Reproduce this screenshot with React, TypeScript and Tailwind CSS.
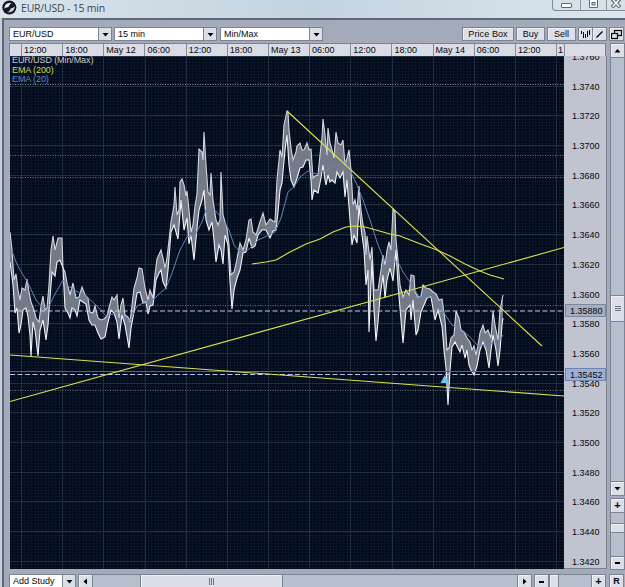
import { type ReactNode } from "react";

const TIMES = ["12:00", "18:00", "May 12", "06:00", "12:00", "18:00", "May 13", "06:00", "12:00", "18:00", "May 14", "06:00", "12:00"];

const PRICES = [
  "1.3760", "1.3740", "1.3720", "1.3700", "1.3680", "1.3660", "1.3640", "1.3620", "1.3600",
  "1.3580", "1.3560", "1.3540", "1.3520", "1.3500", "1.3480", "1.3460", "1.3440", "1.3420",
];

const HIGHS =
  "10,232 12,250 14,280 16,274 18,290 20,300 22,288 25,290 27,279 29,292 31,302 34,310 36,318 39,322 41,306 43,296 45,310 47,308 49,285 51,250 53,236 55,250 58,238 62,238 63,268 65,272 67,283 70,295 73,283 76,298 79,297 82,287 85,295 88,298 90,312 93,313 95,306 98,318 101,320 104,319 107,316 110,304 112,297 114,300 117,295 119,318 121,305 123,298 125,315 128,317 130,322 132,305 134,288 137,278 139,268 142,269 145,288 148,300 150,290 153,298 155,274 157,259 161,250 163,258 165,268 167,258 169,240 171,222 174,205 175,187 177,215 179,210 180,182 182,179 184,185 186,196 187,191 189,210 191,232 193,225 195,206 197,194 199,149 202,152 203,160 204,132 206,165 208,192 210,195 211,173 213,200 216,220 218,225 220,220 221,172 223,215 225,222 227,228 229,245 231,275 234,272 236,264 240,243 243,250 246,240 249,220 251,219 253,232 256,235 259,225 263,213 266,225 270,219 273,221 275,222 277,180 280,150 282,157 284,125 287,111 288,112 289,130 291,148 293,160 296,152 297,146 300,143 302,150 304,150 307,143 309,150 311,149 313,178 315,176 318,175 320,155 322,138 323,119 325,135 327,155 328,128 330,143 332,150 334,158 336,132 338,143 341,145 343,140 345,165 347,158 349,150 351,170 353,205 355,200 357,210 359,186 361,210 363,225 365,232 366,255 367,236 370,260 372,247 374,290 378,290 381,270 383,255 385,265 387,250 389,242 391,250 393,209 395,212 396,240 398,260 400,285 403,297 406,290 409,295 411,275 414,276 415,292 418,297 421,296 423,285 426,288 430,289 433,292 436,294 439,300 442,299 445,320 447,350 449,348 451,338 454,335 456,311 459,318 461,330 464,332 467,338 470,342 472,350 474,346 476,355 478,345 480,333 483,325 485,333 488,330 491,338 493,311 495,325 498,340 500,310 503,295";

const LOWS =
  "10,262 13,285 15,313 17,308 19,333 21,325 23,310 26,308 28,317 30,335 31,356 33,322 35,330 38,356 40,330 43,320 46,340 48,325 50,298 52,272 55,276 57,262 60,260 63,268 65,308 68,313 70,318 72,308 75,310 77,316 80,300 83,302 86,304 89,320 92,325 95,325 98,333 101,339 105,337 108,322 111,310 114,313 117,322 119,339 122,315 125,325 129,348 131,328 134,312 137,293 140,292 143,303 146,302 148,314 150,306 153,305 156,280 159,273 161,270 163,282 166,288 168,270 171,232 174,225 178,239 181,200 184,230 187,218 189,244 191,235 194,260 197,228 199,210 202,200 204,190 206,220 209,230 212,222 214,240 216,262 219,245 221,250 223,264 225,235 228,245 230,282 232,309 234,290 237,278 240,270 243,253 246,252 249,238 252,248 255,246 258,235 262,230 266,230 270,238 273,231 276,230 278,212 280,190 282,183 285,150 287,135 289,165 291,180 294,187 297,178 300,168 303,167 306,160 309,160 311,180 312,200 314,190 318,193 321,178 323,165 325,180 326,185 328,175 330,182 332,180 335,183 337,172 340,178 343,172 345,197 347,180 350,220 352,245 354,235 357,243 359,205 361,228 364,250 366,285 368,270 369,332 372,260 374,310 376,341 378,322 380,297 383,275 385,298 387,280 390,268 393,281 396,250 398,285 401,320 403,343 406,310 410,305 411,320 413,300 416,335 418,330 421,312 424,305 427,298 431,297 435,320 438,310 442,326 444,350 446,368 448,405 450,370 452,347 455,342 458,348 460,352 462,345 465,358 467,350 469,365 471,370 474,375 477,366 480,350 483,342 486,350 489,368 491,350 493,335 496,350 498,366 500,350 502,325 503,318";

const EMA20 =
  "12,251 16,262 20,270 28,283 36,300 42,307 48,308 55,294 63,280 68,286 76,291 86,296 96,305 106,316 113,314 120,313 130,321 137,306 143,303 150,303 158,295 166,288 172,273 180,250 187,237 195,235 202,222 207,207 213,208 222,218 229,230 234,245 240,252 248,250 258,240 267,236 275,232 281,218 288,192 294,187 300,177 308,171 316,174 325,170 334,167 345,162 350,170 357,185 363,200 370,220 377,242 384,260 393,261 398,262 403,272 412,285 419,297 430,297 437,300 444,313 452,325 462,330 470,337 478,346 490,344 499,341 503,335";

const EMA200 =
  "252,264 266,262 276,260 290,252 306,244 320,239 333,232 346,227 355,226 365,227 376,230 390,234 400,236 418,243 437,250 450,256 465,264 480,271 490,275 504,279";

const range = (n: number) => Array.from({ length: n }, (_, i) => i);

function Arrow({ dir }: { dir: "up" | "down" | "left" | "right" }) {
  const points = {
    up: "0.5,5.5 6.5,5.5 3.5,2",
    down: "0.5,2 6.5,2 3.5,5.5",
    left: "5,0.5 5,6.5 1.5,3.5",
    right: "2,0.5 2,6.5 5.5,3.5",
  };
  return (
    <svg width="7" height="7" viewBox="0 0 7 7">
      <polygon points={points[dir]} fill="#000" />
    </svg>
  );
}

function Btn({ className = "", children }: { className?: string; children?: ReactNode }) {
  return (
    <div className={`flex shrink-0 items-center justify-center border border-[#7b8392] bg-[#dcdfe7] shadow-[inset_1px_1px_0_#eef0f5] ${className}`}>
      {children}
    </div>
  );
}

function Combo({ label, className }: { label: string; className: string }) {
  return (
    <div className={`flex h-[14px] shrink-0 border border-[#7b8392] bg-white ${className}`}>
      <span className="flex-1 pl-[3px] leading-[13px]">{label}</span>
      <span className="flex w-[13px] items-center justify-center border-l border-[#7b8392] bg-[#dcdfe7]">
        <Arrow dir="down" />
      </span>
    </div>
  );
}

function TitleBar() {
  return (
    <div className="flex h-[18px] justify-between bg-linear-to-r from-[#d9e4ec] via-[#c4d3df] to-[#dce7ef]">
      <div className="flex pl-[2px]">
        <svg width="15" height="15" viewBox="0 0 15 15" className="shrink-0">
          <circle cx="7.3" cy="7.5" r="7" fill="#161a1f" />
          <path d="M2.5 8.5 C2.5 4 6 2.5 9.5 3.2 C6.5 4 8 6.6 5.6 7.2 C4 7.5 3.2 8 2.5 8.5Z" fill="#eef2f5" />
          <path d="M5 12 C8 12.2 7.4 8.6 10 8 C11.4 7.6 12 7 12.6 6 C13 10 10 13.2 5 12Z" fill="#c9d0d6" />
        </svg>
        <span className="pl-[4px] font-['Open_Sans',sans-serif] text-[10.5px] leading-[16px] tracking-[-0.2px] text-[#3c444c]">EUR/USD - 15 min</span>
      </div>
      <div className="flex h-[11px] w-[73px] rounded-bl-[4px] border-b border-l border-[#7c8893] bg-[#d7e1e9]">
        <div className="flex w-[28px] justify-center border-r border-[#8a96a1] pt-[3px]">
          <div className="h-[5px] w-[11px] rounded-[1px] border border-[#5d6670] bg-white" />
        </div>
        <div className="flex w-[26px] justify-center border-r border-[#8a96a1]">
          <svg width="11" height="9" viewBox="0 0 11 9">
            <path d="M1.5 0V7.5H9.5V0" fill="#fff" stroke="#5d6670" />
            <rect x="4" y="2.5" width="3" height="2.5" fill="#d7e1e9" stroke="#5d6670" />
          </svg>
        </div>
        <div className="flex flex-1 justify-center">
          <svg width="12" height="9" viewBox="0 0 12 9">
            <path d="M2 -1 L10 7.2 M10 -1 L2 7.2" stroke="#5d6670" strokeWidth="3.6" />
            <path d="M2.4 -1 L9.4 6.8 M9.6 -1 L2.6 6.8" stroke="#fff" strokeWidth="1.6" />
          </svg>
        </div>
      </div>
    </div>
  );
}

function Toolbar() {
  return (
    <div className="flex h-[14px] shrink-0">
      <Combo label="EUR/USD" className="w-[103px]" />
      <Combo label="15 min" className="ml-[2px] w-[103px]" />
      <Combo label="Min/Max" className="ml-[3px] w-[103px]" />
      <Btn className="ml-[139px] w-[52px] pt-px tracking-[0.1px]">Price Box</Btn>
      <Btn className="ml-[2px] w-[29px] pt-px">Buy</Btn>
      <Btn className="ml-[2px] w-[29px] pt-px">Sell</Btn>
      <Btn className="ml-[2px] w-[15px]">
        <svg width="11" height="9" viewBox="0 0 11 9" stroke="#000" strokeWidth="1">
          <path d="M1.5 1V4M3.5 2V8M5.5 4V8M7.5 1V7M9.5 0V5" />
        </svg>
      </Btn>
      <Btn className="-ml-px w-[15px]">
        <svg width="9" height="9" viewBox="0 0 9 9">
          <path d="M1.5 7.5L7.5 1.5" stroke="#000" strokeWidth="1.3" />
        </svg>
      </Btn>
      <Btn className="ml-[2px] w-[15px]">
        <svg width="11" height="11" viewBox="0 0 11 11" fill="#dcdfe7" stroke="#000">
          <rect x="3.5" y="1.5" width="7" height="5" strokeWidth="1.2" />
          <rect x="0.5" y="4.5" width="6" height="5" strokeWidth="1.2" />
        </svg>
      </Btn>
    </div>
  );
}

function TimeHeader() {
  return (
    <div className="flex h-[13px] w-[597px] overflow-hidden border border-b-0 border-[#7b8392] bg-[#d9dce4] leading-[12px]">
      <span className="w-[11px] shrink-0" />
      {TIMES.map((t, i) => (
        <span key={i} className="w-[41.17px] shrink-0 whitespace-nowrap border-l border-[#858c9a] pl-[2px]">{t}</span>
      ))}
      <span className="w-[8px] shrink-0 border-l border-[#858c9a] pl-px">1</span>
      <span className="flex-1 border-l border-[#858c9a]" />
    </div>
  );
}

function Chart() {
  return (
    <div className="relative h-[513px] w-[554px] bg-[#020a19]">
      <svg width="554" height="513" viewBox="10 56 554 513" className="block" fill="none">
        <g stroke="#0a1628" shapeRendering="crispEdges">
          {range(162).map((i) => (
            <line key={`v${i}`} x1={11 + i * 3.431} x2={11 + i * 3.431} y1="56" y2="569" />
          ))}
          {range(173).map((i) => (
            <line key={`h${i}`} x1="10" x2="564" y1={57 + i * 2.969} y2={57 + i * 2.969} />
          ))}
        </g>
        <g stroke="#232e3e" shapeRendering="crispEdges">
          {range(14).map((i) => (
            <line key={`V${i}`} x1={21.5 + i * 41.17} x2={21.5 + i * 41.17} y1="56" y2="569" />
          ))}
          {range(18).map((i) => (
            <line key={`H${i}`} x1="10" x2="564" y1={56.5 + i * 29.69} y2={56.5 + i * 29.69} />
          ))}
        </g>
        <path d="M10 84.5H564" stroke="#8e96a5" strokeDasharray="1 1.5" />
        <path d="M10 155.5H564M10 177.5H564M10 305.5H564M10 390.5H564" stroke="#687181" strokeDasharray="1 1.5" />

        <polygon points={`${HIGHS} ${LOWS.split(" ").reverse().join(" ")}`} fill="#747988" />
        <polyline points={HIGHS} stroke="#d3d6de" strokeWidth="1.1" />
        <polyline points={LOWS} stroke="#f1f3f7" strokeWidth="1.1" />
        <polyline points={EMA20} stroke="#6682bd" />

        <path d="M10 311H564" stroke="#c3cbe0" strokeWidth="1.2" strokeDasharray="5 2.5" />
        <path d="M10 371.5H564" stroke="#c23a46" />
        <path d="M10 374.5H564" stroke="#b7c3e6" strokeDasharray="5 2.5" />

        <g stroke="#dde04e" strokeWidth="1.1">
          <polyline points={EMA200} />
          <path d="M287 111L542 346M10 401.5L564 247.5M10 355L564 396" />
        </g>
        <polygon points="444.8,375 449,383 440.5,383" fill="#72c4ee" />
      </svg>
      <div className="absolute left-[2px] top-0 leading-[9.5px] tracking-[-0.1px] text-[#c5cad3]">
        <p>EUR/USD (Min/Max)</p>
        <p className="text-[#d0d64e]">EMA (200)</p>
        <p className="text-[#6482c8]">EMA (20)</p>
      </div>
    </div>
  );
}

function PriceAxis() {
  return (
    <div className="relative h-[513px] w-[43px] overflow-hidden border-b border-r border-[#7b8392] bg-[#c0c4d0]">
      <div className="-mt-[14px] flex flex-col">
        {PRICES.map((p) => (
          <span key={p} className="h-[29.69px] shrink-0 pl-[8px] leading-[30px]">{p}</span>
        ))}
      </div>
      <div className="absolute left-[1px] top-[248px] h-[13px] w-[41px] border border-[#7c8799] bg-[#a5afc0] pl-[4px] leading-[12px]">1.35880</div>
      <div className="absolute left-[1px] top-[312px] h-[13px] w-[41px] border border-[#7085ad] bg-[#9bb0d4] pl-[4px] leading-[12px]">1.35452</div>
    </div>
  );
}

function SideBar() {
  return (
    <div className="flex w-[15px] flex-col">
      <div className="flex h-[453px] flex-col border border-[#7b8392] bg-[#b8bfcc]">
        <Btn className="-mx-px -mt-px h-[15px]"><Arrow dir="up" /></Btn>
        <Btn className="-mx-px mt-[237px] h-[27px]">
          <div className="h-[5px] w-[6px] border-y border-[#6b7383] pt-px">
            <div className="h-px bg-[#6b7383]" />
          </div>
        </Btn>
        <Btn className="-mx-px -mb-px mt-auto h-[15px]"><Arrow dir="down" /></Btn>
      </div>
      <div className="mt-[2px] flex h-[72px] flex-col border border-[#7b8392] bg-[#b8bfcc]">
        <Btn className="-mx-px -mt-px h-[15px] text-[11px] font-bold">+</Btn>
        <Btn className="-mx-px mt-[10px] h-[10px]" />
        <Btn className="-mx-px -mb-px mt-auto h-[14px]"><i className="h-[2px] w-[5px] bg-black" /></Btn>
      </div>
    </div>
  );
}

function BottomBar() {
  return (
    <div className="mt-[4px] flex h-[15px] shrink-0">
      <Combo label="Add Study" className="w-[67px]" />
      <div className="ml-[2px] flex w-[454px] border border-[#7b8392] bg-[#b8bfcc]">
        <Btn className="-my-px -ml-px w-[15px]"><Arrow dir="left" /></Btn>
        <Btn className="-my-px ml-[47px] w-[143px] gap-px">
          <i className="h-[7px] w-px bg-[#6b7383]" />
          <i className="h-[7px] w-px bg-[#6b7383]" />
          <i className="h-[7px] w-px bg-[#6b7383]" />
        </Btn>
        <Btn className="-my-px -mr-px ml-auto w-[15px]"><Arrow dir="right" /></Btn>
      </div>
      <div className="ml-[2px] flex w-[72px] border border-[#7b8392] bg-[#b8bfcc]">
        <Btn className="-my-px -ml-px w-[15px]"><i className="h-[2px] w-[5px] bg-black" /></Btn>
        <Btn className="-my-px w-[10px]" />
        <Btn className="-my-px -mr-px ml-auto w-[15px] text-[11px] font-bold">+</Btn>
      </div>
      <Btn className="ml-[3px] w-[15px] font-bold">R</Btn>
    </div>
  );
}

export default function App() {
  return (
    <div className="h-[587px] w-[625px] overflow-hidden bg-[#c3d0db] font-['Liberation_Sans',Arial,sans-serif] text-[9px] text-[#08090c]">
      <TitleBar />
      <div className="ml-[2px] flex h-[569px] flex-col border-l-2 border-t-2 border-[#5d6775] bg-[#a3abba] pl-[5px] pt-[7px]">
        <Toolbar />
        <div className="mt-[2px] flex gap-[3px]">
          <div>
            <TimeHeader />
            <div className="flex pl-px">
              <Chart />
              <PriceAxis />
            </div>
          </div>
          <SideBar />
        </div>
        <BottomBar />
      </div>
    </div>
  );
}
